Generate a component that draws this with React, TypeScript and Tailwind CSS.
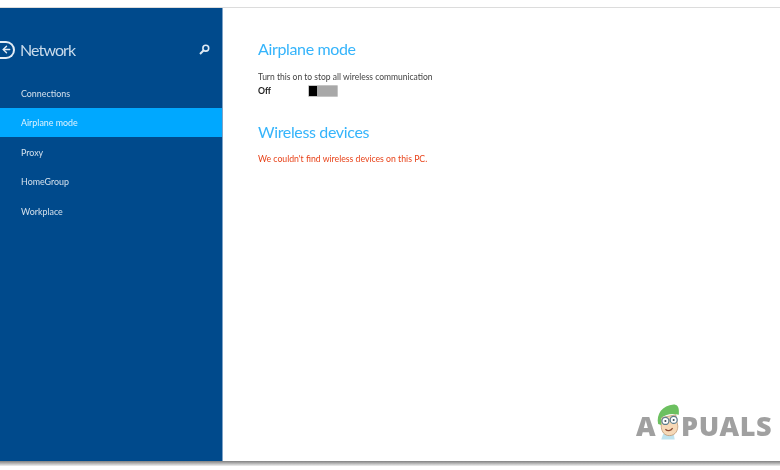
import { ArrowLeft } from "lucide-react";

const items = ["Connections", "Airplane mode", "Proxy", "HomeGroup", "Workplace"];

const Mascot = () => (
    <svg width="29" height="38" viewBox="0 0 28 36" className="mx-[-2px] mb-[-3px] shrink-0">
        <path d="M7 35 L9 29 L19 29 L20 35 Z" fill="#bfe3ef" />
        <path d="M6 14 L21 11 L23 22 C23 28 19 32 13 31 C9 30 7 26 7 22 Z" fill="#f6d9b8" stroke="#b8926e" strokeWidth="0.7" />
        <path d="M4 20 C2 10 8 2 19 1 C22 1 24 3 24 7 L24 11 C17 9 10 11 7 14 L7 21 Z" fill="#6cc060" />
        <circle cx="11" cy="17" r="3.4" fill="#fff" stroke="#5d7c8c" strokeWidth="1.2" />
        <circle cx="19" cy="16" r="3.4" fill="#fff" stroke="#5d7c8c" strokeWidth="1.2" />
        <circle cx="11" cy="17" r="1" fill="#3a4a55" />
        <circle cx="19" cy="16" r="1" fill="#3a4a55" />
        <path d="M11 25 C13 27 16 27 18 24" fill="none" stroke="#8a4b33" strokeWidth="1.2" />
    </svg>
);

const Sidebar = () => (
    <aside className="flex w-[223px] shrink-0 flex-col border-r border-[#7fa3c7] bg-[#004a8c]">
        <div className="flex h-[70px] items-center justify-between pr-[12px] pt-[13px]">
            <div className="flex items-center gap-[5px]">
                <div className="ml-[-1px] flex h-[18px] w-[16px] items-center justify-center rounded-r-full border-2 border-l-0 border-[#e3edf6]">
                    <ArrowLeft size={11} strokeWidth={3} className="text-[#e3edf6]" />
                </div>
                <span className="text-[16px] tracking-[-0.9px] text-[#c9dbeb]">Network</span>
            </div>
            <svg width="11" height="11" viewBox="0 0 11 11" fill="none" stroke="#dfeaf4" strokeWidth="1.6">
                <circle cx="6.8" cy="4.2" r="2.9" />
                <path d="M4.7 6.3 L1 10" strokeWidth="2" />
            </svg>
        </div>
        <nav className="flex flex-col">
            {items.map((item) => (
                <div
                    key={item}
                    className={
                        item === "Airplane mode"
                            ? "flex h-[29.5px] items-center bg-[#00a8ff] pl-[21px] pt-[1px] text-[8.9px] text-[#dff3ff]"
                            : "flex h-[29.5px] items-center pl-[21px] pt-[1px] text-[8.9px] text-[#d3e0ec]"
                    }
                >
                    {item}
                </div>
            ))}
        </nav>
    </aside>
);

export default function App() {
    return (
        <div className="flex h-[470px] w-[780px] flex-col overflow-hidden bg-white font-['Lato',sans-serif] blur-[0.3px]">
            <div className="h-[8px] shrink-0 border-b border-[#dcdcdc] bg-white" />
            <div className="flex h-[453px] shrink-0">
                <Sidebar />
                <main className="relative flex-1 pl-[35px] pt-[31px]">
                    <h1 className="text-[16px] leading-[20px] tracking-[-0.35px] text-[#35b4fb]">Airplane mode</h1>
                    <p className="mt-[12px] text-[8.5px] leading-[12px] text-[#444]">
                        Turn this on to stop all wireless communication
                    </p>
                    <div className="mt-[2px] flex items-center">
                        <span className="w-[50px] text-[8.7px] font-bold leading-[12px] text-[#222]">Off</span>
                        <div className="flex h-[12px] w-[30px] rounded-[1px] border border-[#c4c4c4] bg-[#a8a8a8]">
                            <div className="h-full w-[8px] bg-black" />
                        </div>
                    </div>
                    <h2 className="mt-[25px] text-[16px] leading-[20px] tracking-[-0.35px] text-[#35b4fb]">Wireless devices</h2>
                    <p className="mt-[11px] text-[8.7px] leading-[12px] text-[#e8431a]">
                        We couldn't find wireless devices on this PC.
                    </p>
                    <div className="absolute bottom-[23px] right-[8px] flex items-end font-['Open_Sans',sans-serif] text-[27px] font-extrabold leading-[24px] tracking-[0.5px] text-[#a0a0a0]">
                        <span>A</span>
                        <Mascot />
                        <span>PUALS</span>
                    </div>
                </main>
            </div>
            <div className="h-[5px] shrink-0 bg-gradient-to-b from-[#808080] to-[#f0f0f0]" />
        </div>
    );
}
